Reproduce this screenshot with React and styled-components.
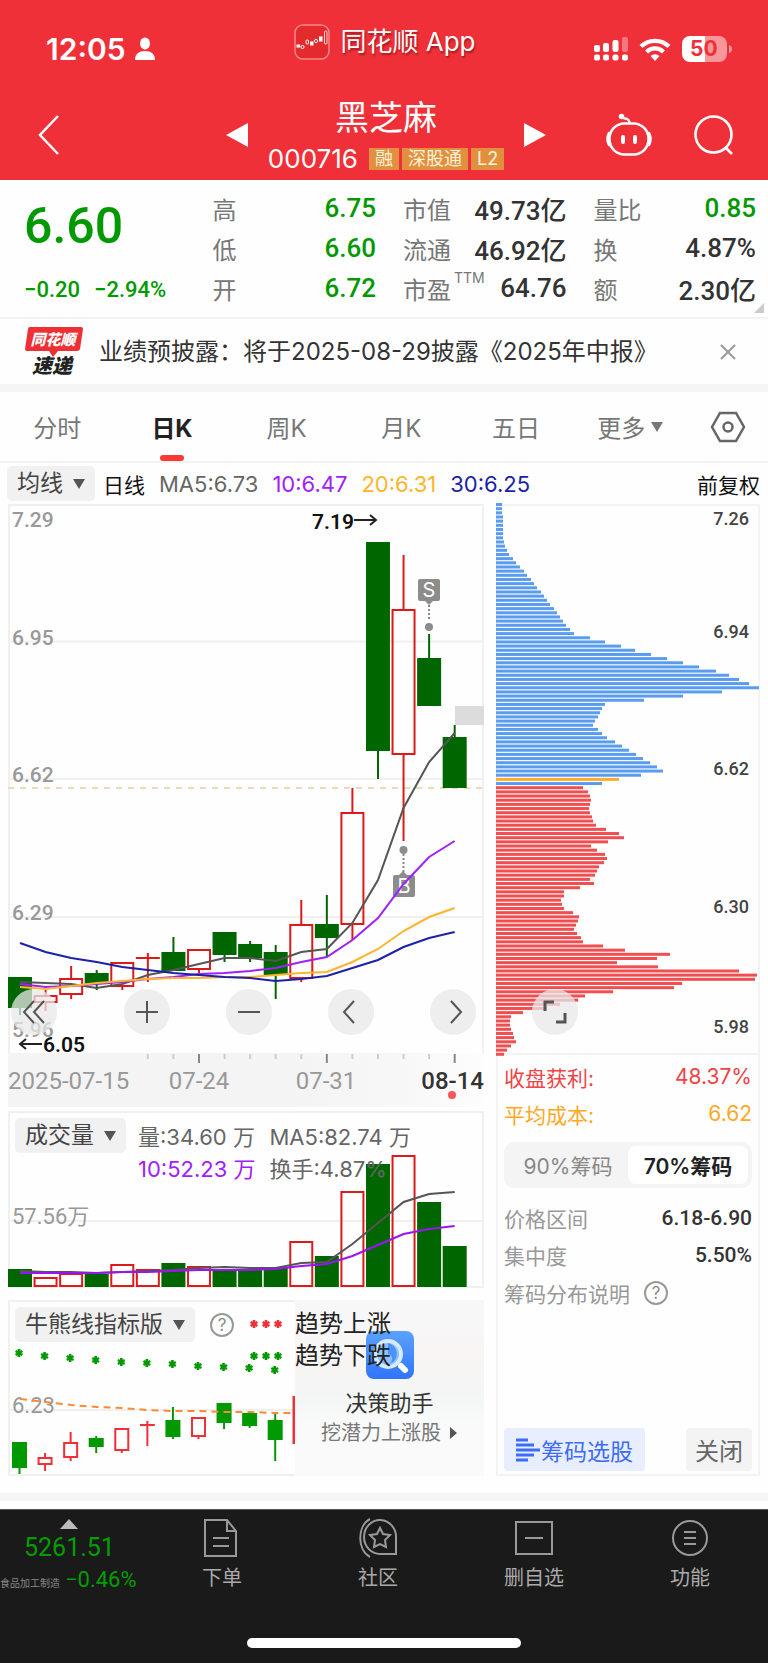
import React, { useState } from 'react';
import styled, { createGlobalStyle } from 'styled-components';

const sans = 'Inter, "Noto Sans CJK SC", sans-serif';
const din = 'Roboto, "Noto Sans CJK SC", sans-serif';

const GlobalStyle = createGlobalStyle`
* { box-sizing: border-box; }
body { margin: 0; background: #fefefe; font-family: ${sans}; color: #333; }
button, select { font-family: inherit; border: 0; margin: 0; padding: 0; background: none; color: inherit; cursor: pointer; }
dl, dd, dt, p, h1 { margin: 0; font-weight: normal; }
svg { display: block; flex: none; overflow: visible; }
`

/* ---------- header ---------- */

const Header = styled.header`
background: #f03038;
color: #fff;
`

const StatusBar = styled.div`
display: grid;
grid-template-columns: 1fr auto 1fr;
align-items: center;
height: 84px;
padding: 0 36px 0 46px;
`

const StatusSide = styled.div`
display: flex;
align-items: center;
justify-content: ${props => props.$end ? 'flex-end' : 'flex-start'};
gap: ${props => props.$end ? '11px' : '9px'};
padding-top: 14px;
font-size: 30px;
line-height: 32px;
font-weight: 600;
`

const AppName = styled.div`
display: flex;
align-items: center;
gap: 10px;
margin-right: 8px;
font-size: 26px;
line-height: 36px;
text-shadow: 1px 2px 2px rgba(90, 0, 0, 0.5);
`

const TitleBar = styled.div`
display: grid;
grid-template-columns: 1fr 320px 1fr;
align-items: center;
height: 96px;
padding: 6px 34px 0 38px;
`

const NavIcons = styled.div`
display: flex;
justify-content: flex-end;
gap: 42px;
`

const StockSwitch = styled.div`
display: flex;
align-items: center;
justify-content: space-between;
`

const StockTitle = styled.div`
display: flex;
flex-direction: column;
align-items: center;
gap: 8px;
`

const StockName = styled.h1`
font-size: 34px;
line-height: 40px;
`

const CodeLine = styled.div`
display: flex;
align-items: center;
gap: 3px;
font-size: 26px;
line-height: 26px;
`

const Code = styled.span`
margin-right: 8px;
`

const Badge = styled.span`
background: #e29040;
color: #fff3d8;
font-size: 18px;
line-height: 22px;
padding: 0 6px;
`

/* ---------- quote ---------- */

const Quote = styled.section`
position: relative;
display: grid;
grid-template-columns: 162fr 164fr 164fr 163fr;
column-gap: 27px;
padding: 8px 12px 9px 24px;
border-bottom: 2px solid #f3f3f3;
`

const PriceBlock = styled.div`
display: flex;
flex-direction: column;
justify-content: space-between;
padding: 10px 0 4px;
color: #009900;
font-family: ${din};
`

const Price = styled.div`
font-size: 50px;
line-height: 56px;
font-weight: 500;
`

const Change = styled.div`
display: flex;
gap: 14px;
font-size: 22px;
line-height: 28px;
font-weight: 500;
white-space: nowrap;
`

const QuoteList = styled.dl`
display: grid;
grid-auto-rows: 40px;
`

const QuoteRow = styled.div`
display: flex;
align-items: center;
justify-content: space-between;
white-space: nowrap;

dt { display: flex; font-size: 24px; color: #777; }
sup { font-size: 14px; line-height: 14px; margin-left: 3px; }
dd { font-family: ${din}; font-size: 26px; font-weight: 500; color: ${props => props.$down ? '#009900' : '#333'}; }
`

const Corner = styled.span`
position: absolute;
right: 4px;
bottom: 4px;
border-left: 10px solid transparent;
border-bottom: 10px solid #ccc;
`

/* ---------- news and tabs ---------- */

const News = styled.section`
display: flex;
align-items: center;
height: 73px;
padding: 0 32px 0 24px;
border-bottom: 8px solid #f5f5f5;
`

const NewsText = styled.a`
flex: 1;
margin-left: 16px;
font-size: 24px;
line-height: 32px;
color: #333;
text-decoration: none;
white-space: nowrap;
`

const Tabs = styled.nav`
display: flex;
height: 71px;
border-bottom: 2px solid #f3f3f3;
`

const Tab = styled.button`
position: relative;
flex: 1;
display: flex;
align-items: center;
justify-content: center;
gap: 5px;
font-size: 24px;
color: ${props => props.$active ? '#222' : '#777'};
font-weight: ${props => props.$active ? 700 : 400};

&::after {
  content: '';
  display: ${props => props.$active ? 'block' : 'none'};
  position: absolute;
  bottom: 0;
  width: 24px;
  height: 6px;
  border-radius: 3px;
  background: #fa3a32;
}
`

const TabSettings = styled.button`
width: 80px;
display: flex;
align-items: center;
justify-content: center;
`

/* ---------- chart area ---------- */

const Legend = styled.div`
display: flex;
align-items: center;
gap: 14px;
height: 41px;
padding: 0 8px 0 7px;
font-size: 22px;
white-space: nowrap;
`

const LegendName = styled.span`
font-size: 21px;
color: #111;
margin-left: -6px;
`

const LegendValue = styled.span`
color: ${props => props.$color};
`

const Adjust = styled.span`
margin-left: auto;
font-size: 21px;
color: #111;
`

const SelectBox = styled.label`
position: relative;
display: block;
flex: none;

select {
  appearance: none;
  display: block;
  height: 35px;
  padding: 0 32px 0 10px;
  border-radius: 5px;
  background: #f1f1f1;
  color: #444;
  font-size: 23px;
  line-height: 35px;
}

svg {
  position: absolute;
  right: 9px;
  top: 13px;
  pointer-events: none;
}
`

const Charts = styled.main`
display: grid;
grid-template-columns: 119fr 66fr;
column-gap: 12px;
padding: 0 8px 17px;
`

const Left = styled.div`
display: flex;
flex-direction: column;
min-width: 0;
`

const Layered = styled.div`
position: relative;
margin-top: ${props => props.$gap || 0}px;
box-shadow: ${props => props.$framed ? 'inset 0 0 0 2px #f0f0f0' : 'none'};
`

const Plot = styled.svg`
width: 100%;
height: auto;
font-family: ${din};
`

const AxisBox = styled.div`
background: linear-gradient(90deg, #f4f4f4 60%, #f8f8f8 85%, #fdfdfd);
`

const Controls = styled.div`
position: absolute;
left: 3px;
right: 8px;
bottom: 18px;
display: flex;
justify-content: space-between;
`

const ControlGroup = styled.div`
display: flex;
gap: 56px;
`

const RoundButton = styled.button`
width: 46px;
height: 46px;
border-radius: 50%;
background: rgba(232, 232, 232, 0.75);
display: flex;
align-items: center;
justify-content: center;
`

const ExpandSpot = styled.div`
position: absolute;
left: 36px;
bottom: 19px;
`

const PanelHead = styled.div`
position: absolute;
left: 7px;
top: 7px;
right: 0;
display: flex;
gap: 12px;
align-items: flex-start;
`

const VolumeText = styled.div`
display: grid;
grid-template-columns: auto auto;
justify-content: start;
column-gap: 14px;
font-size: 22px;
line-height: 32px;
color: #666;
white-space: nowrap;
padding-top: 3px;
`

const HelpButton = styled.button`
width: 24px;
height: 24px;
border: 2px solid #999;
border-radius: 50%;
color: #888;
font-size: 17px;
line-height: 20px;
text-align: center;
`

const HelpSpot = styled.div`
padding: 6px 3px 0;
`

const TrendList = styled.div`
font-size: 24px;
line-height: 32px;
color: #222;
padding-top: 1px;
`

const Trend = styled.div`
display: flex;
align-items: center;
gap: 12px;
white-space: nowrap;
`

const IndicatorGrid = styled.div`
display: grid;
grid-template-columns: 287fr 189fr;
`

const Promo = styled.a`
display: flex;
flex-direction: column;
align-items: center;
padding-top: 31px;
background: linear-gradient(180deg, #f8f8f8 0%, #f8f4f4 34%, #f3f6f5 54%, #fafafa 72%);
text-decoration: none;
color: #333;
font-size: 22px;
line-height: 32px;
`

const PromoTitle = styled.span`
margin-top: 8px;
`

const PromoNote = styled.span`
display: flex;
align-items: center;
gap: 9px;
font-size: 20px;
line-height: 28px;
color: #777;
`

/* ---------- chip panel ---------- */

const Chips = styled.aside`
display: flex;
flex-direction: column;
min-width: 0;
box-shadow: inset 0 0 0 2px #f3f3f3;
`

const ChipInfo = styled.div`
flex: 1;
display: flex;
flex-direction: column;
padding: 4px 8px 5px 8px;
`

const InfoList = styled.dl`
display: grid;
grid-auto-rows: 37px;
`

const InfoRow = styled.div`
display: flex;
align-items: center;
justify-content: space-between;
font-size: 21px;
color: ${props => props.$color || '#999'};
`

const StrongValue = styled.dd`
font-family: ${din};
font-weight: 500;
color: #333;
`

const Segment = styled.div`
display: grid;
grid-template-columns: 1fr 1fr;
height: 46px;
margin: 10px 0 11px;
padding: 4px;
border-radius: 10px;
background: #f4f4f4;
`

const SegmentButton = styled.button`
border-radius: 8px;
font-size: 21px;
white-space: nowrap;
background: ${props => props.$active ? '#fff' : 'transparent'};
color: ${props => props.$active ? '#222' : '#888'};
font-weight: ${props => props.$active ? 600 : 400};
`

const HelpRow = styled.div`
display: flex;
align-items: center;
gap: 14px;
height: 40px;
font-size: 21px;
color: #999;
`

const ChipActions = styled.div`
display: flex;
justify-content: space-between;
margin-top: auto;
`

const ActionButton = styled.button`
display: flex;
align-items: center;
gap: 1px;
height: 43px;
padding: 0 ${props => props.$primary ? '12px' : '9px'};
border-radius: 4px;
font-size: ${props => props.$primary ? '23px' : '24px'};
background: ${props => props.$primary ? '#e9eeff' : '#f3f3f3'};
color: ${props => props.$primary ? '#3c6cfa' : '#666'};
`

/* ---------- bottom bar ---------- */

const Footer = styled.footer`
margin-top: 8px;
background: #1a1a1a;
color: #aaa;
border-top: 1px solid #555;
`

const Band = styled.div`
height: 8px;
background: #f5f5f5;
`

const FooterBar = styled.nav`
display: grid;
grid-template-columns: 144px repeat(4, 1fr);
height: 128px;
padding-top: 8px;
align-items: start;
`

const IndexButton = styled.button`
display: flex;
flex-direction: column;
align-items: flex-start;
color: #009f00;
font-family: ${din};
font-size: 25px;
line-height: 38px;

svg { margin: 1px 0 0 60px; }
`

const IndexValue = styled.span`
margin-left: 24px;
`

const IndexLine = styled.span`
display: flex;
align-items: baseline;
gap: 5px;
font-size: 22px;
line-height: 26px;
white-space: nowrap;

small { font-size: 10px; color: #888; }
`

const FooterButton = styled.button`
display: flex;
flex-direction: column;
align-items: center;
gap: 6px;
font-size: 20px;
line-height: 28px;
`

const HomeIndicator = styled.div`
width: 274px;
height: 10px;
margin: 0 auto;
border-radius: 5px;
background: #fff;
`

const HomeArea = styled.div`
height: 25px;
`

/* ---------- data ---------- */

const STEP = 25.57;

// [up, open/close top, open/close bottom, high, low]
const candles = [
    [0, 473, 504, 473, 511], [1, 491, 499, 486, 507], [1, 474, 491, 462, 495],
    [0, 469, 480, 466, 486], [1, 458, 483, 458, 486], [1, 454, 454, 449, 478],
    [0, 448, 467, 433, 467], [1, 445, 466, 445, 469], [0, 428, 451, 428, 458],
    [0, 440, 454, 437, 458], [0, 448, 471, 441, 495], [1, 420, 475, 396, 478],
    [0, 420, 434, 391, 453], [1, 308, 421, 284, 436], [0, 38, 247, 38, 275],
    [1, 105, 251, 51, 337], [0, 154, 202, 130, 202], [0, 233, 284, 221, 284],
];

const priceLines = [
    ['#555', [478, 479, 480, 484, 480, 471, 466, 460, 454, 454, 457, 448, 445, 419, 376, 304, 258, 229]],
    ['#a020ff', [480, 483, 482, 480, 478, 475, 473, 470, 469, 467, 464, 458, 453, 436, 414, 380, 353, 337]],
    ['#ffb52b', [483, 485, 482, 479, 477, 475, 474, 474, 473, 473, 471, 469, 468, 458, 445, 427, 413, 404]],
    ['#1c22a8', [439, 448, 454, 458, 463, 466, 469, 471, 473, 474, 477, 475, 472, 464, 456, 443, 434, 428]],
];

const volumes = [158, 166, 162, 163, 153, 158, 152, 155, 160, 159, 156, 130, 145, 80, 53, 44, 91, 135];

const volumeLines = [
    ['#555', [160, 161, 161, 162, 161, 160, 159, 157, 156, 157, 157, 152, 151, 133, 112, 91, 83, 81]],
    ['#9a14f0', [162, 162, 162, 162, 161, 161, 160, 159, 159, 159, 158, 155, 153, 145, 134, 123, 118, 115]],
];

const bullCandles = [
    [0, 142, 168, 142, 174], [1, 157, 165, 153, 171], [1, 142, 158, 132, 161],
    [0, 138, 147, 136, 153], [1, 128, 151, 128, 153], [1, 125, 125, 121, 146],
    [0, 120, 137, 107, 139], [1, 117, 137, 117, 139], [0, 103, 123, 103, 129],
    [0, 113, 126, 111, 128], [0, 120, 140, 114, 161],
];

const bullDots = [53, 56, 58, 60, 62, 63, 64, 66, 67, 68, 70];
const bullLine = [99, 102, 105, 107, 108, 110, 111, 111, 112, 112, 113];

const chipsAbove = [
    6, 6, 6, 7, 7, 7, 7, 7, 7, 8, 9, 11, 13, 17, 20, 24, 28, 31, 35, 38, 41, 45, 48, 51, 54, 58, 61, 64, 67, 70,
    74, 78, 94, 109, 125, 139, 155, 171, 187, 203, 220, 233, 243, 253, 263, 226, 187, 148, 109, 106, 104, 102,
    99, 97, 102, 106, 111, 119, 126, 133, 140, 147, 154, 161, 167, 145, 123, 106,
];

const chipsBelow = [
    87, 92, 94, 95, 94, 93, 94, 96, 97, 100, 110, 123, 128, 112, 95, 101, 109, 111, 108, 103, 101, 99, 94, 98,
    84, 68, 68, 65, 66, 68, 77, 83, 82, 80, 78, 81, 85, 87, 107, 129, 174, 161, 121, 162, 243, 261, 259, 186,
    178, 117, 89, 82, 64, 51, 27, 15, 14, 14, 15, 17, 18, 20, 15, 11, 8,
];

const COST_INDEX = 66;

const quotes = [
    [['高', '6.75', true], ['低', '6.60', true], ['开', '6.72', true]],
    [['市值', '49.73亿'], ['流通', '46.92亿'], ['市盈', '64.76']],
    [['量比', '0.85', true], ['换', '4.87%'], ['额', '2.30亿']],
];

const tabs = ['分时', '日K', '周K', '月K', '五日', '更多'];

/* ---------- pieces ---------- */

const points = (values, x0 = 12) => values.map((y, i) => `${x0 + i * STEP},${y}`).join(' ');

const Caret = ({ color = '#555' }) => (
    <svg width="14" height="10" viewBox="0 0 14 10"><path d="M1 0h12L7 10z" fill={color} /></svg>
);

const Candle = ({ x, width, data, up, down }) => {
    const [rising, top, bottom, high, low] = data;
    const color = rising ? up : down;
    return (
        <g stroke={color} strokeWidth="2">
            {high < top && <path d={`M${x} ${high}V${top}`} />}
            {low > bottom && <path d={`M${x} ${bottom}V${low}`} />}
            {top === bottom
                ? <path d={`M${x - width / 2} ${top}h${width}`} />
                : <rect x={x - width / 2 + 1} y={top + 1} width={width - 2} height={bottom - top - 2} fill={rising ? 'none' : color} />}
        </g>
    );
}

const Dropdown = ({ label, options }) => (
    <SelectBox>
        <select aria-label={label}>
            {options.map(option => <option key={option}>{option}</option>)}
        </select>
        <Caret />
    </SelectBox>
);

const Star = ({ x, y, color }) => (
    <path
        d={`M${x} ${y - 4}v8M${x - 3.4} ${y - 2}l6.8 4M${x + 3.4} ${y - 2}l-6.8 4`}
        stroke={color} strokeWidth="2.6"
    />
);

const Stars = ({ color }) => (
    <svg width="34" height="12" viewBox="0 0 34 12">
        <Star x={5} y={6} color={color} />
        <Star x={17} y={6} color={color} />
        <Star x={29} y={6} color={color} />
    </svg>
);

const StatusIcons = () => (
    <StatusSide $end>
        <svg width="34" height="24" viewBox="0 0 34 24" fill="#fff">
            <rect x="0" y="8" width="6" height="7" rx="2" />
            <rect x="9" y="6" width="6" height="9" rx="2" />
            <rect x="18.500" y="3" width="6" height="12" rx="2" />
            <rect x="28" y="0" width="6" height="15" rx="2" opacity=".35" />
            {[0, 9, 18.5, 28].map(x => <rect key={x} x={x} y="17.500" width="6" height="6" rx="2" />)}
        </svg>
        <svg width="32" height="24" viewBox="0 0 32 24" fill="none" stroke="#fff" strokeWidth="4.200">
            <path d="M2 9.500a20 20 0 0 1 28 0" />
            <path d="M7.500 15a12 12 0 0 1 17 0" />
            <path d="M16 24l-4.500-5a6.500 6.500 0 0 1 9 0z" fill="#fff" stroke="none" />
        </svg>
        <svg width="50" height="26" viewBox="0 0 50 26">
            <path d="M8 0h15v26H8a8 8 0 0 1-8-8V8a8 8 0 0 1 8-8z" fill="#fff" />
            <path d="M23 0h14a8 8 0 0 1 8 8v10a8 8 0 0 1-8 8H23z" fill="#f8969a" />
            <path d="M47 9q3 1 3 4t-3 4z" fill="#f8969a" />
            <text x="8" y="20" fontSize="21" fontWeight="700" fill="#f03038" fontFamily="Inter">50</text>
        </svg>
    </StatusSide>
);

const AppLogo = () => (
    <svg width="36" height="36" viewBox="0 0 36 36">
        <rect x="1" y="1" width="34" height="34" rx="8" fill="#e32a2c" stroke="#f5888a" strokeWidth="1.500" />
        <g fill="#fff" stroke="#fff" strokeWidth="1">
            <rect x="3" y="21" width="2.500" height="2" />
            <circle cx="8.500" cy="23" r="1.600" fill="none" />
            <rect x="12" y="16" width="2.500" height="4" rx="1" fill="none" />
            <rect x="16.500" y="18" width="2.500" height="3" />
            <circle cx="22" cy="17" r="1.600" fill="none" />
            <rect x="25.500" y="13" width="2.500" height="4" />
            <rect x="30.500" y="7" width="2.500" height="13" rx="1" fill="none" strokeWidth=".8" />
        </g>
    </svg>
);

const TopHeader = () => (
    <Header>
        <StatusBar>
            <StatusSide>
                <span>12:05</span>
                <svg width="20" height="24" viewBox="0 0 20 24" fill="#fff">
                    <ellipse cx="10" cy="6.500" rx="5" ry="6" />
                    <path d="M0 23c0-6 4-9 10-9s10 3 10 9z" />
                </svg>
            </StatusSide>
            <AppName><AppLogo /><span>同花顺 App</span></AppName>
            <StatusIcons />
        </StatusBar>
        <TitleBar>
            <button aria-label="返回">
                <svg width="22" height="40" viewBox="0 0 22 40" fill="none" stroke="#fff" strokeWidth="2.500">
                    <path d="M20 1L2 20l18 19" />
                </svg>
            </button>
            <StockSwitch>
                <button aria-label="上一只">
                    <svg width="22" height="24" viewBox="0 0 22 24"><path d="M22 0v24L0 12z" fill="#fff" /></svg>
                </button>
                <StockTitle>
                    <StockName>黑芝麻</StockName>
                    <CodeLine>
                        <Code>000716</Code>
                        <Badge>融</Badge>
                        <Badge>深股通</Badge>
                        <Badge>L2</Badge>
                    </CodeLine>
                </StockTitle>
                <button aria-label="下一只">
                    <svg width="22" height="24" viewBox="0 0 22 24"><path d="M0 0v24l22-12z" fill="#fff" /></svg>
                </button>
            </StockSwitch>
            <NavIcons>
                <button aria-label="助手">
                    <svg width="46" height="42" viewBox="0 0 46 42" fill="none" stroke="#fff" strokeWidth="2.600" strokeLinecap="round">
                        <path d="M15 2.500c2 3 8 0 8.500 6.500" />
                        <circle cx="15.500" cy="2.500" r="1.500" fill="#fff" />
                        <rect x="3.500" y="9.500" width="39" height="31" rx="15" />
                        <path d="M3 19q-3 6 0 12M43 19q3 6 0 12" />
                        <path d="M17 23v5M29 23v5" strokeWidth="4" />
                    </svg>
                </button>
                <button aria-label="搜索">
                    <svg width="40" height="40" viewBox="0 0 40 40" fill="none" stroke="#fff" strokeWidth="2.600">
                        <circle cx="19.500" cy="19.500" r="18" />
                        <path d="M31 32l7 7" />
                    </svg>
                </button>
            </NavIcons>
        </TitleBar>
    </Header>
);

const QuoteBoard = () => (
    <Quote>
        <PriceBlock>
            <Price>6.60</Price>
            <Change><span>−0.20</span><span>−2.94%</span></Change>
        </PriceBlock>
        {quotes.map((rows, i) => (
            <QuoteList key={i}>
                {rows.map(([name, value, down]) => (
                    <QuoteRow key={name} $down={down}>
                        <dt>{name}{name === '市盈' && <sup>TTM</sup>}</dt>
                        <dd>{value}</dd>
                    </QuoteRow>
                ))}
            </QuoteList>
        ))}
        <Corner />
    </Quote>
);

const NewsBar = () => (
    <News>
        <svg width="59" height="54" viewBox="0 0 59 54">
            <path d="M6 2h51q2 0 2 2l-3 20q-1 2-3 2H34l-5 6-4-6H3q-2 0-2-2L4 4q0-2 2-2z" fill="#ee2f33" />
            <text x="29" y="20" textAnchor="middle" fontSize="15" fontWeight="900" fontStyle="italic" fill="#fff">同花顺</text>
            <text x="28" y="48" textAnchor="middle" fontSize="20" fontWeight="900" fontStyle="italic" fill="#222">速递</text>
        </svg>
        <NewsText href="#news">业绩预披露：将于2025-08-29披露《2025年中报》</NewsText>
        <button aria-label="关闭公告">
            <svg width="16" height="16" viewBox="0 0 16 16" stroke="#999" strokeWidth="2"><path d="M1 1l14 14M15 1L1 15" /></svg>
        </button>
    </News>
);

const PriceChart = () => (
    <Layered>
        <Plot viewBox="0 0 476 549">
            <path d="M1 549V1h474v548M0 137.500h476M0 275h476M0 413h476" fill="none" stroke="#f0f0f0" strokeWidth="2" />
            <path d="M0 284h476" stroke="#f0d9b8" strokeWidth="2" strokeDasharray="6 6" />
            <g fontSize="21" fontWeight="500" fill="#999">
                <text x="4" y="23">7.29</text>
                <text x="4" y="141">6.95</text>
                <text x="4" y="278">6.62</text>
                <text x="4" y="416">6.29</text>
                <text x="4" y="533">5.96</text>
            </g>
            {candles.map((data, i) => (
                <Candle key={i} x={12 + i * STEP} width={24} data={data} up="#dd1a1a" down="#006600" />
            ))}
            <rect x="447" y="202" width="29" height="19" fill="#dcdcdc" />
            <g fill="#8c8c8c">
                <rect x="410" y="75" width="22" height="22" rx="2" />
                <path d="M417 97h8l-4 4z" />
                <circle cx="421" cy="123" r="4" />
                <circle cx="395.500" cy="346" r="4" />
                <rect x="385" y="371" width="22" height="22" rx="2" />
                <path d="M391 371h8l-4-4z" />
            </g>
            <path d="M421 101v16M395.500 350v18" stroke="#888" strokeWidth="2" strokeDasharray="2 2" />
            <g fontSize="20" fill="#fff" textAnchor="middle" fontFamily="Inter">
                <text x="421" y="93">S</text>
                <text x="396" y="389">B</text>
            </g>
            {priceLines.map(([color, values]) => (
                <polyline key={color} points={points(values)} fill="none" stroke={color} strokeWidth="2" />
            ))}
            <g fontSize="21" fontWeight="600" fill="#111">
                <text x="304" y="25">7.19</text>
                <text x="35" y="548">6.05</text>
            </g>
            <path d="M346 16h22M362 11l6 5-6 5M34 540H12M18 535l-6 5 6 5" fill="none" stroke="#222" strokeWidth="2" />
        </Plot>
        <Controls>
            <RoundButton aria-label="最早">
                <svg width="24" height="24" viewBox="0 0 24 24" fill="none" stroke="#555" strokeWidth="2"><path d="M12 1L2 12l10 11M22 1L12 12l10 11" /></svg>
            </RoundButton>
            <ControlGroup>
                <RoundButton aria-label="放大">
                    <svg width="22" height="22" viewBox="0 0 22 22" stroke="#555" strokeWidth="2"><path d="M0 11h22M11 0v22" /></svg>
                </RoundButton>
                <RoundButton aria-label="缩小">
                    <svg width="22" height="22" viewBox="0 0 22 22" stroke="#555" strokeWidth="2"><path d="M0 11h22" /></svg>
                </RoundButton>
                <RoundButton aria-label="向左">
                    <svg width="22" height="24" viewBox="0 0 22 24" fill="none" stroke="#555" strokeWidth="2"><path d="M14 1L4 12l10 11" /></svg>
                </RoundButton>
                <RoundButton aria-label="向右">
                    <svg width="22" height="24" viewBox="0 0 22 24" fill="none" stroke="#555" strokeWidth="2"><path d="M9 1l10 11L9 23" /></svg>
                </RoundButton>
            </ControlGroup>
        </Controls>
    </Layered>
);

const DateAxis = () => (
    <AxisBox>
        <Plot viewBox="0 0 476 54">
            {candles.map((c, i) => i > 4 && (
                <path
                    key={i} d={`M${12 + i * STEP} 1v${[7, 12, 17].includes(i) ? 9 : 5}`}
                    stroke={[7, 12, 17].includes(i) ? '#888' : '#ccc'} strokeWidth="2"
                />
            ))}
            <g fontSize="24" fill="#999">
                <text x="0" y="36">2025-07-15</text>
                <text x="191" y="36" textAnchor="middle">07-24</text>
                <text x="318" y="36" textAnchor="middle">07-31</text>
                <text x="476" y="36" textAnchor="end" fill="#333" fontWeight="500">08-14</text>
            </g>
            <circle cx="444" cy="42" r="4" fill="#f8565a" />
        </Plot>
    </AxisBox>
);

const VolumeChart = () => (
    <Layered $gap={4} $framed>
        <Plot viewBox="0 0 476 177">
            <path d="M0 110h476" stroke="#f0f0f0" strokeWidth="2" />
            <text x="4" y="113" fontSize="22" fill="#999">57.56万</text>
            {volumes.map((top, i) => (
                <Candle
                    key={i} x={12 + i * STEP} width={24} up="#dd1a1a" down="#006600"
                    data={[candles[i][0], top, 176, top, 176]}
                />
            ))}
            {volumeLines.map(([color, values]) => (
                <polyline key={color} points={points(values)} fill="none" stroke={color} strokeWidth="2" />
            ))}
        </Plot>
        <PanelHead>
            <Dropdown label="副图指标" options={['成交量', '成交额']} />
            <VolumeText>
                <span>量:34.60 万</span>
                <span>MA5:82.74 万</span>
                <LegendValue $color="#a020ff">10:52.23 万</LegendValue>
                <span>换手:4.87%</span>
            </VolumeText>
        </PanelHead>
    </Layered>
);

const IndicatorChart = () => (
    <Layered $gap={12} $framed>
        <IndicatorGrid>
            <Plot viewBox="0 0 287 176">
                <path d="M0 110h287" stroke="#f0f0f0" strokeWidth="2" />
                <text x="4" y="113" fontSize="22" fill="#999">6.23</text>
                {bullCandles.map((data, i) => (
                    <Candle key={i} x={11.5 + i * STEP} width={15} data={data} up="#f03038" down="#009900" />
                ))}
                <path d="M286 96v48" stroke="#f03038" strokeWidth="3" />
                <polyline points={`${points(bullLine)} 287,113`} fill="none" stroke="#ff8a33" strokeWidth="2" strokeDasharray="7 5" />
                {bullDots.map((y, i) => <Star key={i} x={11 + i * STEP} y={y} color="#009900" />)}
            </Plot>
            <Promo href="#assistant">
                <svg width="48" height="48" viewBox="0 0 48 48">
                    <defs>
                        <linearGradient id="promo" x1="0" y1="0" x2="0" y2="1">
                            <stop offset="0" stopColor="#5aa2ff" />
                            <stop offset="1" stopColor="#2f74fb" />
                        </linearGradient>
                    </defs>
                    <rect width="48" height="48" rx="8" fill="url(#promo)" />
                    <circle cx="22" cy="23" r="13" fill="#8cc0ff" stroke="#d8eaff" strokeWidth="4" />
                    <path d="M22 12a11 11 0 0 1 2 21c4-6 2-9-2-10z" fill="#4b93fb" />
                    <path d="M35 35l4 4" stroke="#fff" strokeWidth="6" strokeLinecap="round" />
                </svg>
                <PromoTitle>决策助手</PromoTitle>
                <PromoNote>
                    挖潜力上涨股
                    <svg width="8" height="12" viewBox="0 0 8 12"><path d="M0 0v12l7-6z" fill="#555" /></svg>
                </PromoNote>
            </Promo>
        </IndicatorGrid>
        <PanelHead>
            <Dropdown label="指标" options={['牛熊线指标版', 'MACD']} />
            <HelpSpot><HelpButton aria-label="指标说明">?</HelpButton></HelpSpot>
            <TrendList>
                <Trend><Stars color="#f03038" />趋势上涨</Trend>
                <Trend><Stars color="#009900" />趋势下跌</Trend>
            </TrendList>
        </PanelHead>
    </Layered>
);

const ChipBars = () => (
    <Layered>
        <Plot viewBox="0 0 264 550">
            <rect x="1" y="1" width="262" height="549" fill="none" stroke="#f3f3f3" strokeWidth="2" />
            {chipsAbove.concat(chipsBelow).map((width, i) => {
                const color = i < chipsAbove.length ? '#5a9cf0' : '#f04e50';
                return <rect key={i} x="0" y={i * 4.165 - 1} width={width} height="3" fill={i === COST_INDEX ? '#ffab2e' : color} />;
            })}
            <g fontSize="18" fontWeight="500" fill="#444" textAnchor="end">
                <text x="253" y="21">7.26</text>
                <text x="253" y="134">6.94</text>
                <text x="253" y="271">6.62</text>
                <text x="253" y="409">6.30</text>
                <text x="253" y="529">5.98</text>
            </g>
        </Plot>
        <ExpandSpot>
            <RoundButton aria-label="全屏">
                <svg width="24" height="24" viewBox="0 0 24 24" fill="none" stroke="#555" strokeWidth="3">
                    <path d="M2 11V2h9M22 13v9h-9" />
                </svg>
            </RoundButton>
        </ExpandSpot>
    </Layered>
);

const ChipPanel = () => {
    const [range, setRange] = useState('70%');
    return (
        <Chips>
            <ChipBars />
            <ChipInfo>
                <InfoList>
                    <InfoRow $color="#f04448"><dt>收盘获利:</dt><dd>48.37%</dd></InfoRow>
                    <InfoRow $color="#ffa826"><dt>平均成本:</dt><dd>6.62</dd></InfoRow>
                </InfoList>
                <Segment>
                    {['90%', '70%'].map(item => (
                        <SegmentButton key={item} $active={range === item} aria-pressed={range === item} onClick={() => setRange(item)}>
                            {item}筹码
                        </SegmentButton>
                    ))}
                </Segment>
                <InfoList>
                    <InfoRow><dt>价格区间</dt><StrongValue>6.18-6.90</StrongValue></InfoRow>
                    <InfoRow><dt>集中度</dt><StrongValue>5.50%</StrongValue></InfoRow>
                </InfoList>
                <HelpRow>筹码分布说明<HelpButton aria-label="筹码分布说明">?</HelpButton></HelpRow>
                <ChipActions>
                    <ActionButton $primary>
                        <svg width="24" height="24" viewBox="0 0 24 24" stroke="#3c6cfa" strokeWidth="3">
                            <path d="M0 2h12M0 7h18M0 12h24M0 17h18M0 22h12" />
                        </svg>
                        筹码选股
                    </ActionButton>
                    <ActionButton>关闭</ActionButton>
                </ChipActions>
            </ChipInfo>
        </Chips>
    );
}

const footerItems = [
    ['下单', <path key="a" d="M5 2h20l9 11v25H3V2zM25 2v11h9M11 20h16M11 28h16" />],
    ['社区', <g key="b">
        <path d="M12 1C-1 8-1 32 12 39" />
        <path d="M38 36V20A16 17 0 1 0 22 36z" />
        <path d="M22 10l3 6 7 1-5 5 1 7-6-3-6 3 1-7-5-5 7-1z" />
    </g>],
    ['删自选', <path key="c" d="M2 4h36v32H2zM11 20h18" />],
    ['功能', <g key="d"><circle cx="20" cy="20" r="17" /><path d="M14 14h12M14 20h12M14 26h12" /></g>],
];

const BottomBar = () => (
    <Footer>
        <FooterBar>
            <IndexButton>
                <svg width="18" height="10" viewBox="0 0 18 10"><path d="M9 0l9 10H0z" fill="#bbb" /></svg>
                <IndexValue>5261.51</IndexValue>
                <IndexLine><small>食品加工制造</small>−0.46%</IndexLine>
            </IndexButton>
            {footerItems.map(([name, icon]) => (
                <FooterButton key={name}>
                    <svg width="40" height="40" viewBox="0 0 40 40" fill="none" stroke="#999" strokeWidth="2">{icon}</svg>
                    {name}
                </FooterButton>
            ))}
        </FooterBar>
        <HomeArea><HomeIndicator /></HomeArea>
    </Footer>
);

const App = () => {
    const [tab, setTab] = useState('日K');
    return (
        <>
            <GlobalStyle />
            <TopHeader />
            <QuoteBoard />
            <NewsBar />
            <Tabs>
                {tabs.map(name => (
                    <Tab key={name} $active={tab === name} onClick={() => setTab(name)}>
                        {name}{name === '更多' && <Caret color="#777" />}
                    </Tab>
                ))}
                <TabSettings aria-label="设置">
                    <svg width="34" height="30" viewBox="0 0 34 30" fill="none" stroke="#666" strokeWidth="2.500">
                        <path d="M9 1h16l8 14-8 14H9L1 15z" />
                        <circle cx="17" cy="15" r="4.500" />
                    </svg>
                </TabSettings>
            </Tabs>
            <Legend>
                <Dropdown label="主图指标" options={['均线', '布林']} />
                <LegendName>日线</LegendName>
                <LegendValue $color="#666">MA5:6.73</LegendValue>
                <LegendValue $color="#a020ff">10:6.47</LegendValue>
                <LegendValue $color="#ffb52b">20:6.31</LegendValue>
                <LegendValue $color="#1c22a8">30:6.25</LegendValue>
                <Adjust>前复权</Adjust>
            </Legend>
            <Charts>
                <Left>
                    <PriceChart />
                    <DateAxis />
                    <VolumeChart />
                    <IndicatorChart />
                </Left>
                <ChipPanel />
            </Charts>
            <Band />
            <BottomBar />
        </>
    );
}

export default App
